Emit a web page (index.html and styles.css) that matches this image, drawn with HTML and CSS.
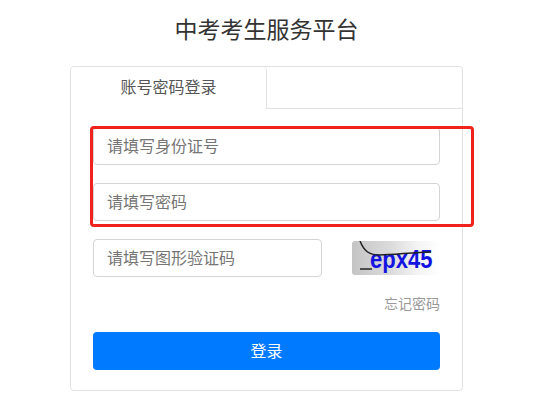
FILE: index.html
```html
<!DOCTYPE html>
<html lang="zh-CN">
<head>
    <meta charset="UTF-8">
    <meta name="viewport" content="width=device-width, initial-scale=1.0">
    <title>中考考生服务平台</title>
    <link rel="stylesheet" href="styles.css">
</head>
<body>
    <div class="page">
        <h1 class="title">中考考生服务平台</h1>
        <div class="card">
            <div class="tabs">
                <div class="tab">账号密码登录</div>
            </div>
            <form class="form">
                <input class="field" type="text" placeholder="请填写身份证号">
                <input class="field" type="password" placeholder="请填写密码">
                <div class="captcha-row">
                    <input class="field captcha-field" type="text" placeholder="请填写图形验证码">
                    <div class="captcha">
                        <span class="captcha-text">epx45</span>
                        <svg class="captcha-lines" viewBox="0 0 88 34" width="88" height="34">
                            <path d="M8 0C12 10 17 14 27 14C42 14 62 11 79 11" fill="none" stroke="#222" stroke-width="1.5"/>
                            <path d="M8 28H20" fill="none" stroke="#222" stroke-width="1.5"/>
                        </svg>
                    </div>
                </div>
                <a class="forgot">忘记密码</a>
                <button class="submit" type="button">登录</button>
            </form>
            <div class="highlight"></div>
        </div>
    </div>
</body>
</html>
```

FILE: styles.css
```css
body{font-family:"Liberation Sans","Noto Sans CJK SC",sans-serif;margin:0;padding:0;background-color:#fff;color:#333;overflow:hidden}
.page{width:393px;margin-left:70px}
.title{margin:0;height:66px;padding-top:15px;box-sizing:border-box;font-size:23px;line-height:30px;font-weight:400;text-align:center;color:#333}
.card{position:relative;box-sizing:border-box;height:325px;border:1px solid #e2e2e2;border-radius:4px}
.tabs{height:41px;border-bottom:1px solid #e2e2e2;box-sizing:content-box}
.tab{box-sizing:border-box;width:196px;height:42px;line-height:41px;text-align:center;font-size:16px;color:#555;background:#fff;border-right:1px solid #e2e2e2;border-radius:4px 4px 0 0}
.form{display:flex;flex-direction:column;padding:18px 22px 0 22px}
.field{box-sizing:border-box;display:block;width:347px;height:38px;margin-bottom:18px;padding:1px 13px 0 13px;border:1px solid #d4d4d4;border-radius:4px;font-family:inherit;font-size:16px;color:#333;outline:none}
.field::placeholder{color:#757575;opacity:1}
.captcha-row{display:flex;align-items:center;justify-content:space-between}
.captcha-field{width:229px;margin-bottom:0}
.captcha{position:relative;width:88px;height:34px;border-radius:3px;overflow:hidden;background:linear-gradient(90deg,#c4c4c4 0%,#dcdcdc 45%,#f4f4f4 75%,#fff 100%)}
.captcha-lines{position:absolute;left:0;top:0}
.captcha-text{position:absolute;left:18px;top:8px;font-size:22px;line-height:26px;font-weight:700;color:#1414e0;transform:scaleY(1.2);transform-origin:left bottom}
.forgot{align-self:flex-end;margin-top:17px;font-size:14px;line-height:20px;color:#999}
.submit{margin-top:18px;width:347px;height:38px;padding:0 0 2px 0;border:none;border-radius:4px;background-color:#007bff;color:#fff;font-family:inherit;font-size:16px;cursor:pointer}
.highlight{position:absolute;left:19px;top:59px;width:384px;height:101px;box-sizing:border-box;border:3px solid #f0231c;border-radius:4px;pointer-events:none}
```
